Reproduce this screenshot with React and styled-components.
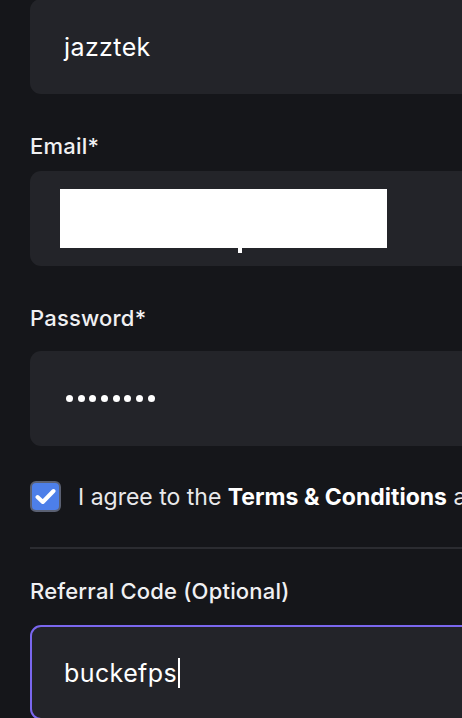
import styled, { createGlobalStyle } from "styled-components";

const GlobalStyle = createGlobalStyle`
  html, body {
    margin: 0;
    padding: 0;
    background: #15161a;
    overflow: hidden;
  }
  body {
    font-family: "Inter", "Liberation Sans", sans-serif;
    color: #f2f2f3;
  }
`;

const Form = styled.div`
  width: 520px;
  margin-top: -1px;
  padding-left: 30px;
  display: flex;
  flex-direction: column;
`;

const Label = styled.div`
  font-size: 22px;
  line-height: 24px;
  font-weight: 500;
  letter-spacing: 0.2px;
  color: #f0f0f2;
  margin-top: ${(p) => p.$top || 38}px;
  margin-bottom: ${(p) => p.$gap || 20}px;
`;

const Box = styled.div`
  position: relative;
  box-sizing: border-box;
  height: 95px;
  border-radius: 11px;
  background: #232429;
  border: ${(p) => (p.$focused ? "2px solid #7a67ee" : "none")};
  padding-left: ${(p) => (p.$focused ? 32 : 34)}px;
  display: flex;
  align-items: center;
  font-size: 25px;
  letter-spacing: 0.4px;
  color: #ffffff;
`;

const Caret = styled.span`
  display: inline-block;
  width: 2px;
  height: 30px;
  margin-left: 1px;
  background: #ffffff;
  vertical-align: middle;
`;

const Redaction = styled.div`
  position: absolute;
  left: 30px;
  top: 18px;
  width: 327px;
  height: 59px;
  background: #ffffff;
  &::after {
    content: "";
    position: absolute;
    left: 178px;
    top: 59px;
    width: 4px;
    height: 5px;
    background: #ffffff;
  }
`;

const Dots = styled.div`
  display: flex;
  gap: 4.7px;
  padding-left: 2px;
`;

const Dot = styled.span`
  width: 7px;
  height: 7px;
  border-radius: 50%;
  background: #ffffff;
`;

const AgreeRow = styled.div`
  margin-top: 35px;
  display: flex;
  align-items: center;
  gap: 17px;
  white-space: nowrap;
  font-size: 23px;
  color: #e9e9eb;
`;

const Check = styled.div`
  box-sizing: border-box;
  flex: none;
  width: 31px;
  height: 31px;
  border-radius: 6px;
  background: #4d7fe9;
  border: 2px solid #5a6072;
  display: flex;
  align-items: center;
  justify-content: center;
`;

const Strong = styled.b`
  font-weight: 700;
  color: #ffffff;
`;

const Divider = styled.hr`
  margin: 35px 0 0 0;
  border: none;
  height: 2px;
  background: #2b2c31;
`;

export default function App() {
  const dots = Array.from({ length: 8 });
  return (
    <>
      <GlobalStyle />
      <Form>
        <Box>jazztek</Box>

        <Label $top={40} $gap={13}>Email*</Label>
        <Box>
          <Redaction />
        </Box>

        <Label $top={40} $gap={21}>Password*</Label>
        <Box>
          <Dots>
            {dots.map((_, i) => (
              <Dot key={i} />
            ))}
          </Dots>
        </Box>

        <AgreeRow>
          <Check>
            <svg width="21" height="17" viewBox="0 0 21 17">
              <path
                d="M2.5 9 L7.8 14 L18.5 3"
                fill="none"
                stroke="#ffffff"
                strokeWidth="4"
                strokeLinecap="round"
                strokeLinejoin="round"
              />
            </svg>
          </Check>
          <span>
            I agree to the <Strong>Terms &amp; Conditions</Strong> and Privacy Policy
          </span>
        </AgreeRow>

        <Divider />

        <Label $top={30} $gap={22}>Referral Code (Optional)</Label>
        <Box $focused>
          buckefps
          <Caret />
        </Box>
      </Form>
    </>
  );
}
